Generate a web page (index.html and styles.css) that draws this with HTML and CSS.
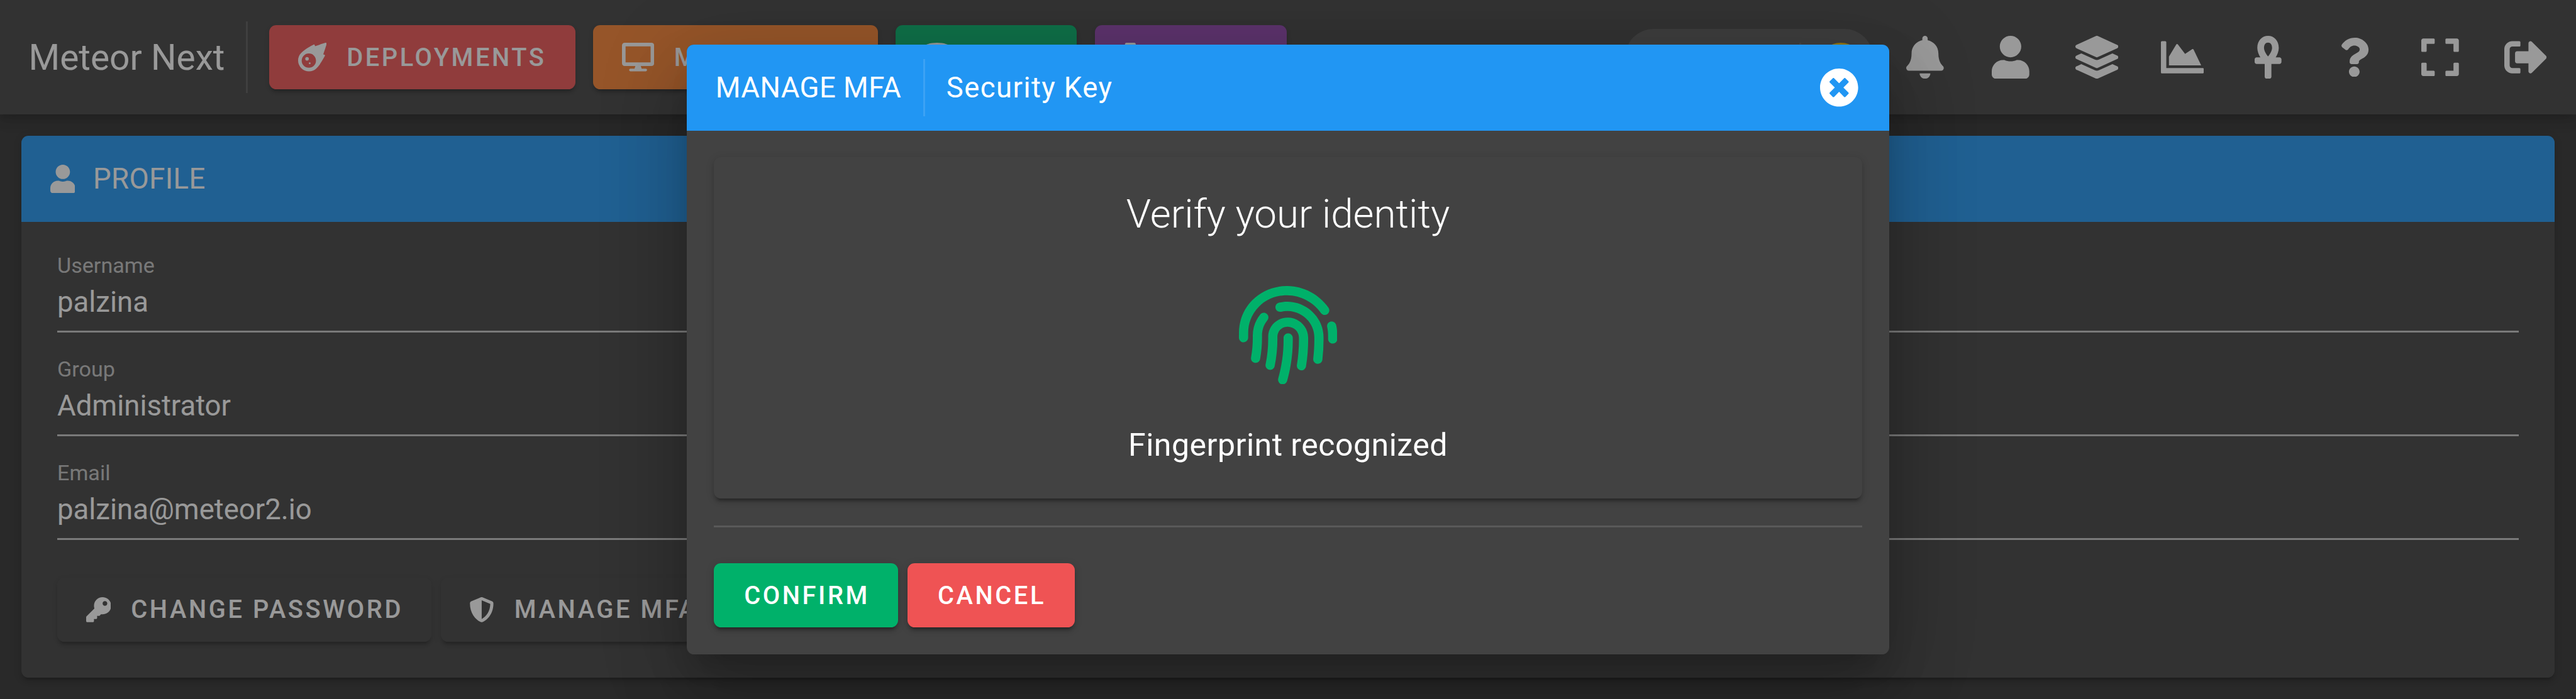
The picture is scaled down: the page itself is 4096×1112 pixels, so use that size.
FILE: index.html
```html
<!DOCTYPE html>
<html lang="en">
<head>
<meta charset="utf-8">
<title>Meteor Next</title>
<link rel="stylesheet" href="styles.css">
</head>
<body>
<header class="topbar">
  <div class="brand">Meteor Next</div>
  <div class="brand-divider"></div>
  <nav class="nav">
    <button class="btn red nav-deploy"><svg class="i16" viewBox="0 0 512 512"><path d="M511.328,20.8027c-11.60759,38.70264-34.30724,111.70173-61.30311,187.70077,6.99893,2.09372,13.4042,4,18.60653,5.59368a16.06158,16.06158,0,0,1,9.49854,22.906c-22.106,42.29635-82.69047,152.795-142.47819,214.40356-.99984,1.09373-1.99969,2.5-2.99954,3.49995A194.83046,194.83046,0,1,1,57.085,179.41009c.99985-1,2.40588-2,3.49947-3,61.59994-59.90549,171.97367-120.40473,214.37343-142.4982a16.058,16.058,0,0,1,22.90274,9.49988c1.59351,5.09368,3.49947,11.5936,5.5929,18.59351C379.34818,35.00565,452.43074,12.30281,491.12794.70921A16.18325,16.18325,0,0,1,511.328,20.8027ZM319.951,320.00207A127.98041,127.98041,0,1,0,191.97061,448.00046,127.97573,127.97573,0,0,0,319.951,320.00207Zm-127.98041-31.9996a31.9951,31.9951,0,1,1-31.9951-31.9996A31.959,31.959,0,0,1,191.97061,288.00247Zm31.9951,79.999a15.99755,15.99755,0,1,1-15.99755-15.9998A16.04975,16.04975,0,0,1,223.96571,368.00147Z"/></svg>DEPLOYMENTS</button>
    <button class="btn orange nav-monitor"><svg class="i16" viewBox="0 0 576 512"><path d="M528 0H48C21.5 0 0 21.5 0 48v320c0 26.5 21.5 48 48 48h192l-16 48h-72c-13.3 0-24 10.7-24 24s10.7 24 24 24h272c13.3 0 24-10.7 24-24s-10.7-24-24-24h-72l-16-48h192c26.5 0 48-21.5 48-48V48c0-26.5-21.5-48-48-48zm-16 352H64V64h448v288z"/></svg>MONITORING</button>
    <button class="btn green nav-utils"><svg class="i16" viewBox="0 0 448 512"><path d="M448 73.143v45.714C448 159.143 347.667 192 224 192S0 159.143 0 118.857V73.143C0 32.857 100.333 0 224 0s224 32.857 224 73.143zM448 176v102.857C448 319.143 347.667 352 224 352S0 319.143 0 278.857V176c48.125 33.143 136.208 48.572 224 48.572S399.874 209.143 448 176zm0 160v102.857C448 479.143 347.667 512 224 512S0 479.143 0 438.857V336c48.125 33.143 136.208 48.572 224 48.572S399.874 369.143 448 336z"/></svg></button>
    <button class="btn purple nav-client"><svg class="i16" viewBox="0 0 320 512"><path d="M296 160H180.6l42.6-129.8C227.2 15 215.7 0 200 0H56C44 0 33.8 8.9 32.2 20.8l-32 240C-1.7 275.2 9.500 288 24 288h118.700L96.600 482.500c-3.600 15.200 8 29.500 23.300 29.500 8.400 0 16.400-4.400 20.800-12l176-304c9.300-15.900-2.200-36-20.700-36z"/></svg></button>
  </nav>
  <div class="pill">
    <span class="pill-divider"></span>
    <svg class="pill-icon" viewBox="0 0 14 16"><ellipse cx="7" cy="2.3" rx="6" ry="2.3"/></svg>
  </div>
  <div class="tools">
    <a class="tool"><svg class="i24" viewBox="0 0 448 512"><path d="M224 512c35.32 0 63.97-28.65 63.97-64H160.03c0 35.35 28.65 64 63.97 64zm215.39-149.71c-19.32-20.76-55.47-51.99-55.47-154.29 0-77.7-54.48-139.9-127.94-155.16V32c0-17.67-14.32-32-31.98-32s-31.98 14.33-31.98 32v20.84C118.56 68.1 64.08 130.3 64.08 208c0 102.3-36.15 133.53-55.47 154.29-6 6.45-8.66 14.16-8.61 21.71.11 16.4 12.98 32 32.1 32h383.8c19.12 0 32-15.6 32.1-32 .05-7.55-2.61-15.27-8.61-21.71z"/></svg></a>
    <a class="tool"><svg class="i24" viewBox="0 0 448 512"><path d="M224 256c70.7 0 128-57.3 128-128S294.7 0 224 0 96 57.3 96 128s57.3 128 128 128zm89.6 32h-16.7c-22.2 10.2-46.9 16-72.9 16s-50.6-5.8-72.9-16h-16.7C60.2 288 0 348.2 0 422.4V464c0 26.5 21.5 48 48 48h352c26.5 0 48-21.5 48-48v-41.6c0-74.2-60.2-134.4-134.4-134.4z"/></svg></a>
    <a class="tool"><svg class="i24" viewBox="0 0 512 512"><path d="M12.41 148.02l232.94 105.67c6.8 3.09 14.49 3.09 21.29 0l232.94-105.67c16.55-7.51 16.55-32.52 0-40.03L266.65 2.31a25.607 25.607 0 0 0-21.29 0L12.41 107.98c-16.55 7.51-16.55 32.53 0 40.04zm487.18 88.28l-58.09-26.33-161.64 73.27c-7.56 3.43-15.59 5.17-23.86 5.17s-16.29-1.74-23.86-5.17L70.51 209.97l-58.1 26.33c-16.55 7.5-16.55 32.5 0 40l232.94 105.59c6.8 3.08 14.49 3.08 21.29 0L499.59 276.3c16.55-7.5 16.55-32.5 0-40zm0 127.8l-57.87-26.23-161.86 73.37c-7.56 3.43-15.59 5.17-23.86 5.17s-16.29-1.74-23.86-5.17L70.29 337.87 12.41 364.1c-16.55 7.5-16.55 32.5 0 40l232.94 105.59c6.8 3.08 14.49 3.08 21.29 0L499.59 404.1c16.55-7.5 16.55-32.5 0-40z"/></svg></a>
    <a class="tool"><svg class="i24" viewBox="0 0 512 512"><path d="M500 384c6.6 0 12 5.4 12 12v40c0 6.6-5.4 12-12 12H12c-6.6 0-12-5.4-12-12V76c0-6.6 5.4-12 12-12h40c6.6 0 12 5.4 12 12v308h436zM372.7 159.5L288 216l-85.3-113.7c-5.1-6.8-15.5-6.3-19.9 1L96 248v104h384l-89.900-187.800c-3.200-6.500-11.400-8.700-17.400-4.700z"/></svg></a>
    <a class="tool"><svg class="i24" viewBox="0 0 320 512"><path d="M296 256h-44.630C272.460 222.700 288 181.800 288 144 288 55.630 230.690 0 160 0S32 55.630 32 144c0 37.800 15.540 78.700 36.630 112H24c-13.250 0-24 10.740-24 24v32c0 13.250 10.750 24 24 24h96v152c0 13.250 10.750 24 24 24h32c13.250 0 24-10.750 24-24V336h96c13.250 0 24-10.750 24-24v-32c0-13.260-10.750-24-24-24zM160 80c29.610 0 48 24.520 48 64 0 34.660-27.140 78.140-48 100.870-20.860-22.720-48-66.210-48-100.870 0-39.480 18.390-64 48-64z"/></svg></a>
    <a class="tool"><svg class="i22" viewBox="0 0 384 512"><path d="M202.021 0C122.202 0 70.503 32.703 29.914 91.026c-7.363 10.580-5.093 25.086 5.178 32.874l43.138 32.709c10.373 7.865 25.132 6.026 33.253-4.148 25.049-31.381 43.630-49.449 82.757-49.449 30.764 0 68.816 19.799 68.816 49.631 0 22.552-18.617 34.134-48.993 51.164-35.423 19.860-82.299 44.576-82.299 106.405V320c0 13.255 10.745 24 24 24h72.471c13.255 0 24-10.745 24-24v-5.773c0-42.860 125.268-44.645 125.268-160.627C377.504 66.256 286.902 0 202.021 0zM192 373.459c-38.196 0-69.271 31.075-69.271 69.271 0 38.195 31.075 69.270 69.271 69.270s69.271-31.075 69.271-69.271-31.075-69.270-69.271-69.270z"/></svg></a>
    <a class="tool"><svg class="i24" viewBox="0 0 448 512"><path d="M0 180V56c0-13.300 10.700-24 24-24h124c6.600 0 12 5.400 12 12v40c0 6.600-5.400 12-12 12H64v84c0 6.600-5.400 12-12 12H12c-6.600 0-12-5.400-12-12zM288 44v40c0 6.600 5.400 12 12 12h84v84c0 6.600 5.400 12 12 12h40c6.600 0 12-5.400 12-12V56c0-13.300-10.700-24-24-24H300c-6.600 0-12 5.400-12 12zm148 276h-40c-6.600 0-12 5.400-12 12v84h-84c-6.600 0-12 5.400-12 12v40c0 6.600 5.400 12 12 12h124c13.300 0 24-10.700 24-24V332c0-6.600-5.400-12-12-12zM160 468v-40c0-6.600-5.400-12-12-12H64v-84c0-6.600-5.400-12-12-12H12c-6.600 0-12 5.400-12 12v124c0 13.300 10.700 24 24 24h124c6.600 0 12-5.400 12-12z"/></svg></a>
    <a class="tool"><svg class="i24" viewBox="0 0 512 512"><path d="M497 273L329 441c-15 15-41 4.500-41-17v-96H152c-13.300 0-24-10.700-24-24v-96c0-13.300 10.700-24 24-24h136V88c0-21.400 25.900-32 41-17l168 168c9.300 9.400 9.300 24.600 0 34zM192 436v-40c0-6.600-5.400-12-12-12H96c-17.700 0-32-14.300-32-32V160c0-17.700 14.300-32 32-32h84c6.600 0 12-5.400 12-12V76c0-6.600-5.400-12-12-12H96c-53 0-96 43-96 96v192c0 53 43 96 96 96h84c6.600 0 12-5.400 12-12z"/></svg></a>
  </div>
</header>

<main class="page">
  <section class="card">
    <div class="card-bar"><svg class="i16" viewBox="0 0 448 512"><path d="M224 256c70.7 0 128-57.3 128-128S294.7 0 224 0 96 57.3 96 128s57.3 128 128 128zm89.6 32h-16.7c-22.2 10.2-46.9 16-72.9 16s-50.6-5.8-72.9-16h-16.7C60.2 288 0 348.2 0 422.4V464c0 26.5 21.5 48 48 48h352c26.5 0 48-21.5 48-48v-41.6c0-74.2-60.2-134.4-134.4-134.4z"/></svg>PROFILE</div>
    <div class="card-body">
      <div class="field"><div class="label">Username</div><div class="value">palzina</div></div>
      <div class="field"><div class="label">Group</div><div class="value">Administrator</div></div>
      <div class="field"><div class="label">Email</div><div class="value">palzina@meteor2.io</div></div>
      <div class="actions">
        <button class="btn plain change-password"><svg class="i14" viewBox="0 0 512 512"><path d="M512 176.001C512 273.203 433.202 352 336 352c-11.220 0-22.190-1.062-32.827-3.069l-24.012 27.014A23.999 23.999 0 0 1 261.223 384H224v40c0 13.255-10.745 24-24 24h-40v40c0 13.255-10.745 24-24 24H24c-13.255 0-24-10.745-24-24v-78.059c0-6.365 2.529-12.470 7.029-16.971l161.802-161.802C163.108 213.814 160 195.271 160 176 160 78.798 238.797.001 335.999 0 433.488-.001 512 78.511 512 176.001zM336 128c0 26.510 21.490 48 48 48s48-21.490 48-48-21.490-48-48-48-48 21.490-48 48z"/></svg>CHANGE PASSWORD</button>
        <button class="btn plain"><svg class="i14" viewBox="0 0 512 512"><path d="M466.5 83.7l-192-80a48.15 48.15 0 0 0-36.9 0l-192 80C27.7 91.1 16 108.6 16 128c0 198.500 114.500 335.700 221.500 380.300 11.800 4.900 25.100 4.900 36.900 0C360.100 472.600 496 349.300 496 128c0-19.400-11.700-36.900-29.500-44.300zM256.100 446.300l-.1-381 175.900 73.300c-3.300 151.400-82.100 261.100-175.800 307.700z"/></svg>MANAGE MFA</button>
      </div>
    </div>
  </section>
</main>

<div class="overlay">
  <div class="dialog">
    <div class="dialog-bar">
      <span class="dialog-title">MANAGE MFA</span>
      <span class="dialog-divider"></span>
      <span class="dialog-sub">Security Key</span>
      <svg class="i22 close" viewBox="0 0 512 512"><path d="M256 8C119 8 8 119 8 256s111 248 248 248 248-111 248-248S393 8 256 8zm121.6 313.1c4.7 4.7 4.7 12.3 0 17L338 377.6c-4.7 4.7-12.3 4.7-17 0L256 312l-65.1 65.6c-4.7 4.7-12.3 4.7-17 0L134.4 338c-4.7-4.7-4.7-12.3 0-17l65.6-65-65.6-65.1c-4.7-4.7-4.7-12.3 0-17l39.6-39.6c4.7-4.7 12.3-4.7 17 0l65 65.7 65.1-65.6c4.7-4.7 12.3-4.7 17 0l39.6 39.6c4.7 4.7 4.7 12.3 0 17L312 256l65.6 65.1z"/></svg>
    </div>
    <div class="dialog-body">
      <div class="verify">
        <div class="verify-title">Verify your identity</div>
        <svg class="finger" viewBox="0 0 512 512"><path d="M256.12 245.96c-13.25 0-24 10.74-24 24 1.14 72.25-8.14 141.9-27.7 211.55-2.73 9.72 2.15 30.49 23.12 30.49 10.48 0 20.11-6.92 23.09-17.52 13.53-47.91 31.04-125.41 29.48-224.52.01-13.25-10.73-24-23.99-24zm-.86-81.73C194 164.16 151.25 211.3 152.1 265.32c.75 47.94-3.75 95.91-13.37 142.55-2.69 12.98 5.67 25.69 18.64 28.36 13.05 2.67 25.67-5.66 28.36-18.64 10.34-50.09 15.17-101.58 14.37-153.02-.41-25.95 19.92-52.49 54.45-52.34 31.31.47 57.15 25.34 57.62 55.47.77 48.05-2.81 96.33-10.61 143.55-2.17 13.06 6.69 25.42 19.76 27.58 19.97 3.33 26.81-15.1 27.58-19.77 8.28-50.03 12.06-101.21 11.27-152.11-.88-55.8-47.94-101.88-104.91-102.72zm-110.69-19.78c-10.3-8.34-25.37-6.8-33.76 3.48-25.62 31.5-39.39 71.28-38.75 112 .59 37.58-2.47 75.27-9.11 112.05-2.34 13.05 6.31 25.53 19.36 27.89 20.11 3.5 27.07-14.81 27.89-19.36 7.19-39.84 10.5-80.66 9.86-121.33-.47-29.88 9.2-57.88 28-80.97 8.35-10.28 6.79-25.39-3.49-33.76zm109.47-62.33c-15.41-.41-30.87 1.44-45.78 4.97-12.89 3.06-20.87 15.98-17.83 28.89 3.06 12.89 16 20.83 28.89 17.83 11.05-2.61 22.47-3.77 34-3.69 75.43 1.13 137.73 61.5 138.88 134.58.59 37.88-1.28 76.11-5.58 113.63-1.5 13.17 7.95 25.08 21.11 26.58 16.72 1.95 25.51-11.88 26.58-21.11a929.06 929.06 0 0 0 5.89-119.85c-1.56-98.75-85.07-180.33-186.16-181.83zm252.07 121.45c-2.86-12.92-15.51-21.2-28.61-18.27-12.94 2.86-21.12 15.66-18.26 28.61 4.71 21.41 4.91 37.41 4.7 61.6-.11 13.27 10.55 24.09 23.8 24.2h.2c13.17 0 23.89-10.61 24-23.8.18-22.18.4-44.11-5.83-72.34zm-40.12-90.72C417.29 43.46 337.6 1.29 252.81.02 183.02-.82 118.47 24.91 70.46 72.94 24.09 119.37-.9 181.04.14 246.65l-.12 21.47c-.39 13.25 10.03 24.31 23.28 24.69.23.02.48.02.72.02 12.92 0 23.59-10.3 23.97-23.3l.16-23.64c-.83-52.5 19.16-101.86 56.28-139 38.76-38.8 91.34-59.67 147.68-58.86 69.45 1.03 134.73 35.56 174.62 92.39 7.61 10.86 22.56 13.45 33.42 5.86 10.84-7.62 13.46-22.59 5.84-33.43z"/></svg>
        <div class="verify-status">Fingerprint recognized</div>
      </div>
      <div class="rule"></div>
      <div class="dialog-actions">
        <button class="btn green confirm">CONFIRM</button>
        <button class="btn red cancel">CANCEL</button>
      </div>
    </div>
  </div>
</div>
</body>
</html>
```

FILE: styles.css
```css
/* 1rem = 10 design pixels on a 1440-wide layout */
html { font-size: 28.4444px; }
* { box-sizing: border-box; }
body {
  margin: 0;
  height: 39.1rem;
  max-height: 100vh;
  overflow: hidden;
  background: #303030;
  color: #fff;
  font-family: Roboto, "Liberation Sans", sans-serif;
  font-size: 1.6rem;
}
svg { display: block; flex: none; fill: currentColor; }
.i14 { height: 1.4rem; }
.i16 { height: 1.6rem; }
.i22 { height: 2.2rem; }
.i24 { height: 2.4rem; }

.btn {
  display: flex;
  align-items: center;
  height: 3.6rem;
  padding: 0 1.6rem;
  border: 0;
  border-radius: .4rem;
  color: #fff;
  font-family: inherit;
  font-size: 1.4rem;
  font-weight: 500;
  letter-spacing: .125rem;
  white-space: nowrap;
  box-shadow: 0 .3rem .1rem -.2rem rgba(0,0,0,.2), 0 .2rem .2rem 0 rgba(0,0,0,.14), 0 .1rem .5rem 0 rgba(0,0,0,.12);
}
.btn svg { margin-right: 1.125rem; }
.red { background: #ef5354; }
.orange { background: #fa8231; }
.green { background: #00b16a; }
.purple { background: #8e44ad; }
.plain { background: #424242; }

.topbar {
  position: relative;
  display: flex;
  align-items: center;
  height: 6.4rem;
  padding: 0 .4rem 0 1.6rem;
  background: #424242;
  box-shadow: 0 .2rem .4rem -.1rem rgba(0,0,0,.2), 0 .4rem .5rem 0 rgba(0,0,0,.14), 0 .1rem 1rem 0 rgba(0,0,0,.12);
}
.brand { width: 12.15rem; font-size: 2rem; white-space: nowrap; }
.brand-divider { width: 3px; height: 4rem; margin-right: 1.2rem; background: rgba(255,255,255,.12); }
.nav { display: flex; gap: 1rem; }
.nav-deploy { width: 17.1rem; }
.nav-monitor { width: 15.92rem; }
.nav-utils { width: 10.12rem; }
.nav-client { width: 10.75rem; }
.pill {
  display: flex;
  align-items: center;
  justify-content: flex-end;
  width: 13.85rem;
  height: 3.2rem;
  margin: 0 .5rem 0 auto;
  padding-right: 1.1rem;
  border-radius: 1.6rem;
  background: #555;
}
.pill-divider { width: 3px; height: 1.6rem; margin-right: 1.5rem; background: #666; }
.pill-icon { height: 1.6rem; color: #f5be00; }
.tools { display: flex; }
.tool { display: flex; align-items: center; justify-content: center; width: 4.8rem; height: 4.8rem; }

.page { padding: 1.2rem; }
.card {
  height: 30.3rem;
  border-radius: .4rem;
  background: #424242;
  box-shadow: 0 .3rem .1rem -.2rem rgba(0,0,0,.2), 0 .2rem .2rem 0 rgba(0,0,0,.14), 0 .1rem .5rem 0 rgba(0,0,0,.12);
}
.card-bar {
  display: flex;
  align-items: center;
  gap: 1rem;
  height: 4.8rem;
  padding: 0 1.6rem;
  border-radius: .4rem .4rem 0 0;
  background: #2196f3;
  letter-spacing: .0094em;
}
.card-body { padding: 1.45rem 2rem 0; }
.field { height: 4.75rem; margin-bottom: 1.05rem; border-bottom: 3px solid rgba(255,255,255,.7); }
.label { color: rgba(255,255,255,.7); font-size: 1.2rem; line-height: 2rem; }
.value { line-height: 2.1rem; }
.actions { display: flex; gap: .5rem; padding-top: 1.05rem; }
.change-password { width: 20.93rem; }

.overlay {
  position: absolute;
  inset: 0;
  display: flex;
  align-items: center;
  justify-content: center;
  background: rgba(33,33,33,.46);
}
.dialog {
  width: 67.2rem;
  height: 34.1rem;
  border-radius: .4rem;
  background: #424242;
  box-shadow: 0 1.1rem 1.5rem -.7rem rgba(0,0,0,.2), 0 2.4rem 3.8rem .3rem rgba(0,0,0,.14), 0 .9rem 4.6rem .8rem rgba(0,0,0,.12);
}
.dialog-bar {
  display: flex;
  align-items: center;
  height: 4.8rem;
  padding: 0 1.7rem 0 1.6rem;
  border-radius: .4rem .4rem 0 0;
  background: #2196f3;
}
.dialog-title { width: 11.6rem; letter-spacing: .0094em; }
.dialog-divider { width: 3px; height: 3.2rem; margin-right: 1.2rem; background: rgba(255,255,255,.12); }
.dialog-sub { letter-spacing: .03125em; }
.close { margin-left: auto; }
.dialog-body { padding: 1.5rem; }
.verify {
  display: flex;
  flex-direction: column;
  align-items: center;
  height: 19.1rem;
  padding-top: 1.5rem;
  border-radius: .4rem;
  box-shadow: 0 .3rem .1rem -.2rem rgba(0,0,0,.2), 0 .2rem .2rem 0 rgba(0,0,0,.14), 0 .1rem .5rem 0 rgba(0,0,0,.12);
}
.verify-title { font-size: 2.24rem; font-weight: 300; line-height: 3.4rem; }
.finger { width: 5.5rem; height: 5.5rem; margin-top: 2.3rem; color: #00b16a; }
.verify-status { margin-top: 2.2rem; font-size: 1.76rem; line-height: 2.4rem; letter-spacing: .0094em; }
.rule { height: 3px; margin: 1.5rem 0 2rem; background: rgba(255,255,255,.12); }
.dialog-actions { display: flex; gap: .5rem; }
.confirm { width: 10.32rem; padding: 0 0 0 1.7rem; }
.cancel { width: 9.37rem; padding: 0 0 0 1.7rem; }
```
